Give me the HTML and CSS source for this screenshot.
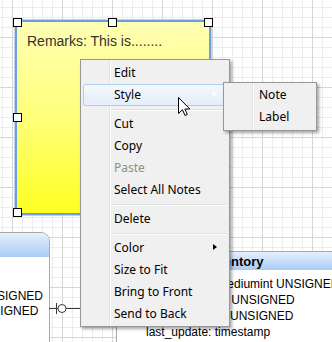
FILE: index.html
```html
<!DOCTYPE html>
<html>
<head>
<meta charset="utf-8">
<link rel="stylesheet" href="styles.css">
</head>
<body>
<div class="canvas">
  <div class="note">
    <p class="note-text">Remarks: This is........</p>
  </div>
  <span class="handle h-tl"></span>
  <span class="handle h-tm"></span>
  <span class="handle h-tr"></span>
  <span class="handle h-ml"></span>
  <span class="handle h-bl"></span>

  <div class="entity entity-left">
    <div class="entity-head"></div>
    <div class="entity-body">
      <div class="row">smallint UNSIGNED</div>
      <div class="row row-short">smallint UNSIGNED</div>
    </div>
  </div>

  <svg class="connector" width="40" height="14" viewBox="0 0 40 14">
    <line x1="0" y1="7.5" x2="40" y2="7.5" stroke="#3a3a3a" stroke-width="1"/>
    <line x1="7.5" y1="2" x2="7.5" y2="13" stroke="#3a3a3a" stroke-width="1"/>
    <circle cx="13" cy="7.5" r="4" fill="#fff" stroke="#3a3a3a" stroke-width="1"/>
  </svg>

  <div class="entity entity-right">
    <div class="entity-head">inventory</div>
    <div class="entity-body">
      <div class="row">inventory_id: mediumint UNSIGNED</div>
      <div class="row">film_id: smallint UNSIGNED</div>
      <div class="row">store_id: tinyint UNSIGNED</div>
      <div class="row">last_update: timestamp</div>
    </div>
  </div>

  <div class="menu">
    <div class="mi">Edit</div>
    <div class="mi active sub-light">Style</div>
    <div class="sep"></div>
    <div class="mi">Cut</div>
    <div class="mi">Copy</div>
    <div class="mi disabled">Paste</div>
    <div class="mi">Select All Notes</div>
    <div class="sep"></div>
    <div class="mi">Delete</div>
    <div class="sep"></div>
    <div class="mi sub">Color</div>
    <div class="mi">Size to Fit</div>
    <div class="mi">Bring to Front</div>
    <div class="mi">Send to Back</div>
  </div>

  <div class="submenu">
    <div class="mi">Note</div>
    <div class="mi">Label</div>
  </div>

  <svg class="cursor" width="13" height="20" viewBox="0 0 13 20">
    <path d="M0.5 0.5 L0.5 16.5 L4.5 12.7 L7 18.5 L9.3 17.5 L6.9 12 L11.8 12 Z" fill="#fff" stroke="#000" stroke-width="1" stroke-linejoin="miter"/>
  </svg>
</div>
</body>
</html>
```

FILE: styles.css
```css
html, body {
  margin: 0;
  padding: 0;
  background: #fff;
}

.canvas {
  position: relative;
  width: 332px;
  height: 342px;
  overflow: hidden;
  background:
    linear-gradient(to right, #d6d6d6 1px, transparent 1px) 12px 0 / 50px 50px,
    linear-gradient(to bottom, #d6d6d6 1px, transparent 1px) 0 37px / 50px 50px,
    linear-gradient(to right, #ececec 1px, transparent 1px) 2px 0 / 10px 10px,
    linear-gradient(to bottom, #ececec 1px, transparent 1px) 0 7px / 10px 10px,
    #fff;
  font-family: "Liberation Sans", Arial, sans-serif;
}

/* Note */
.note {
  position: absolute;
  left: 15px;
  top: 20px;
  width: 196px;
  height: 195px;
  box-sizing: border-box;
  border: 2px solid #6b9fdd;
  box-shadow: 0 0 0 1px rgba(160, 195, 235, 0.7);
  background: linear-gradient(to bottom, #ffffb4 0%, #ffff7a 50%, #ffff22 100%);
  padding: 11px 0 0 10px;
}

.note-text {
  margin: 0;
  font-size: 14px;
  line-height: 16px;
  color: #333;
}

.handle {
  position: absolute;
  width: 7px;
  height: 7px;
  background: #fff;
  border: 1px solid #000;
}
.h-tl { left: 13px; top: 18px; }
.h-tm { left: 108px; top: 18px; }
.h-tr { left: 204px; top: 18px; }
.h-ml { left: 13px; top: 113px; }
.h-bl { left: 13px; top: 208px; }

/* Entities */
.entity {
  position: absolute;
  background: #fff;
  border: 1px solid #a8a8a8;
  font-size: 12px;
  color: #000;
}

.entity-head {
  background: linear-gradient(to bottom, #e6f0fc, #a9cbf5);
  font-weight: bold;
  font-size: 13px;
}

.entity-left {
  left: -70px;
  top: 232px;
  width: 118px;
  height: 140px;
  border-top-right-radius: 9px;
  overflow: hidden;
}
.entity-left .entity-head {
  height: 24px;
}
.entity-left .entity-body {
  padding: 32px 6px 0 0;
  text-align: right;
}
.entity-left .row {
  line-height: 15px;
  white-space: nowrap;
}
.entity-left .row-short {
  padding-right: 15px;
}

.entity-right {
  left: 116px;
  top: 251px;
  width: 240px;
  height: 120px;
  border-top-left-radius: 9px;
  overflow: hidden;
}
.entity-right .entity-head {
  height: 18px;
  line-height: 20px;
  padding-left: 88px;
}
.entity-right .entity-body {
  padding: 6px 0 0 29px;
}
.entity-right .row {
  line-height: 16px;
  white-space: nowrap;
}

.connector {
  position: absolute;
  left: 49px;
  top: 301px;
}

/* Menus */
.menu, .submenu {
  position: absolute;
  box-sizing: border-box;
  border: 1px solid #979797;
  box-shadow: 2px 2px 3px rgba(0, 0, 0, 0.35);
  font-family: "Noto Sans", "Open Sans", sans-serif;
  font-size: 12px;
  color: #000;
}

.menu {
  left: 80px;
  top: 59px;
  width: 150px;
  height: 268px;
  padding: 2px 2px 1px 2px;
  background:
    linear-gradient(to right, transparent 28px, #e2e3e3 28px, #e2e3e3 29px, #fff 29px, #fff 30px, transparent 30px),
    #f0f0f0;
}

.mi {
  position: relative;
  box-sizing: border-box;
  height: 22px;
  line-height: 20px;
  padding-left: 30px;
  border: 1px solid transparent;
  border-radius: 3px;
  white-space: nowrap;
}

.mi.active {
  border-color: #aecbf0;
  background: linear-gradient(to bottom, #f4f8fd, #e4edfa);
}

.mi.disabled {
  color: #8d8d8d;
}

.mi.sub::after,
.mi.sub-light::after {
  content: "";
  position: absolute;
  right: 9px;
  top: 6px;
  border-style: solid;
  border-width: 3.5px 0 3.5px 4px;
  border-color: transparent transparent transparent #000;
}
.mi.sub-light::after {
  border-left-color: #ffffff;
}

.sep {
  height: 7px;
  margin-left: 29px;
  background: linear-gradient(to bottom, transparent 3px, #e0e0e0 3px, #e0e0e0 4px, #fff 4px, #fff 5px, transparent 5px);
}

.submenu {
  left: 223px;
  top: 82px;
  width: 94px;
  height: 49px;
  padding: 1px 2px 2px 2px;
  background:
    linear-gradient(to right, transparent 28px, #e2e3e3 28px, #e2e3e3 29px, #fff 29px, #fff 30px, transparent 30px),
    #f0f0f0;
}
.submenu .mi {
  padding-left: 32px;
}

.cursor {
  position: absolute;
  left: 178px;
  top: 97px;
}
```
